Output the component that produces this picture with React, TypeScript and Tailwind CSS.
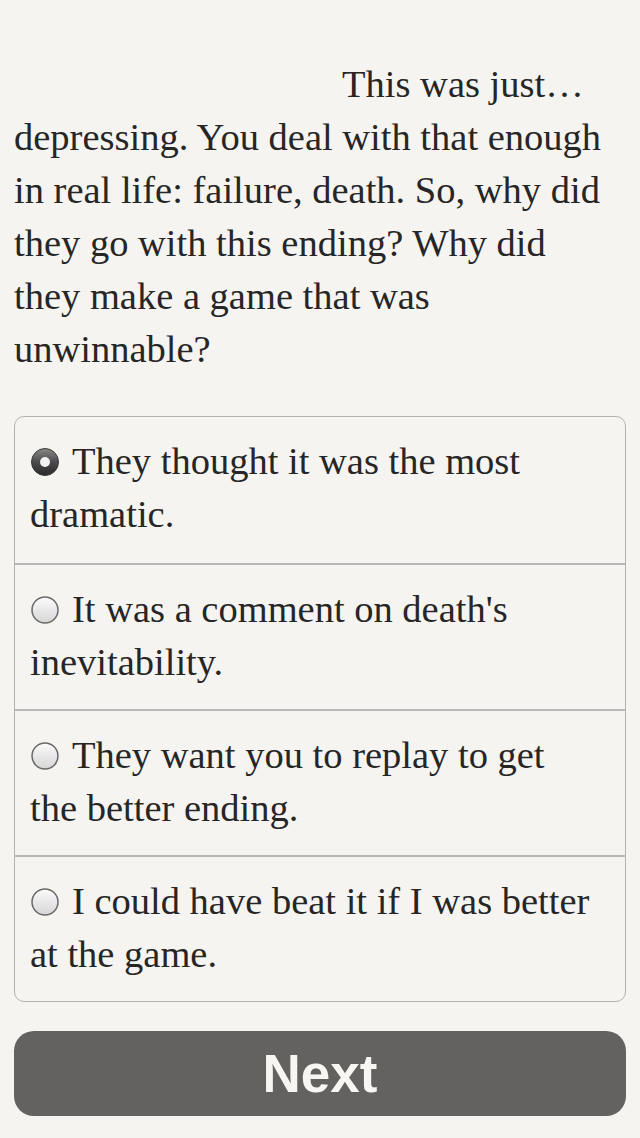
import React from 'react';

const paragraph = [
    "depressing. You deal with that enough",
    "in real life: failure, death. So, why did",
    "they go with this ending? Why did",
    "they make a game that was",
    "unwinnable?",
];

const options = [
    ["They thought it was the most", "dramatic."],
    ["It was a comment on death's", "inevitability."],
    ["They want you to replay to get", "the better ending."],
    ["I could have beat it if I was better", "at the game."],
];

const Radio = ({ checked }: { checked: boolean }) => (
    <svg width="30" height="30" viewBox="0 0 30 30" className="inline-block align-[-3px] mr-[12px]">
        <defs>
            <linearGradient id="radio-on" x1="0" y1="0" x2="0" y2="1">
                <stop offset="0" stopColor="#8a8a8a" />
                <stop offset="0.5" stopColor="#4a4a4a" />
                <stop offset="1" stopColor="#2a2a2a" />
            </linearGradient>
            <linearGradient id="radio-off" x1="0" y1="0" x2="0" y2="1">
                <stop offset="0" stopColor="#fbfbfb" />
                <stop offset="1" stopColor="#d6d6d6" />
            </linearGradient>
        </defs>
        {checked ? (
            <>
                <circle cx="15" cy="15" r="13.5" fill="url(#radio-on)" stroke="#3a3a3a" strokeWidth="1" />
                <circle cx="15" cy="15" r="5" fill="#f2f2f2" />
            </>
        ) : (
            <circle cx="15" cy="15" r="13" fill="url(#radio-off)" stroke="#6a6a6a" strokeWidth="1.5" />
        )}
    </svg>
);

const App = () => {
    return (
        <div className="min-h-[1138px] w-[640px] bg-[#f5f4f0] text-[#262626] font-['Liberation_Serif',serif]">
            <div className="px-[14px] pt-[58px]">
                <p className="text-[38.5px] leading-[53px] whitespace-nowrap">
                    <span className="block pl-[328px]">This was just…</span>
                    {paragraph.map((line, i) => (
                        <span key={i} className="block">{line}</span>
                    ))}
                </p>
            </div>

            <div className="mx-[14px] mt-[40px] rounded-[10px] border border-[#b3b3b3] overflow-hidden">
                {options.map(([first, second], i) => (
                    <div
                        key={i}
                        className={`h-[146px] px-[15px] pt-[18px] text-[38.5px] leading-[53px] whitespace-nowrap ${i > 0 ? 'border-t-2 border-[#b8b8b8]' : ''}`}
                    >
                        <div>
                            <Radio checked={i === 0} />
                            {first}
                        </div>
                        <div>{second}</div>
                    </div>
                ))}
            </div>

            <div className="px-[14px] pt-[29px]">
                <button className="w-full h-[85px] rounded-[20px] bg-[#636260] text-[#f7f6f2] font-['Liberation_Sans',sans-serif] font-bold text-[53px]">
                    Next
                </button>
            </div>
        </div>
    );
};

export default App;
